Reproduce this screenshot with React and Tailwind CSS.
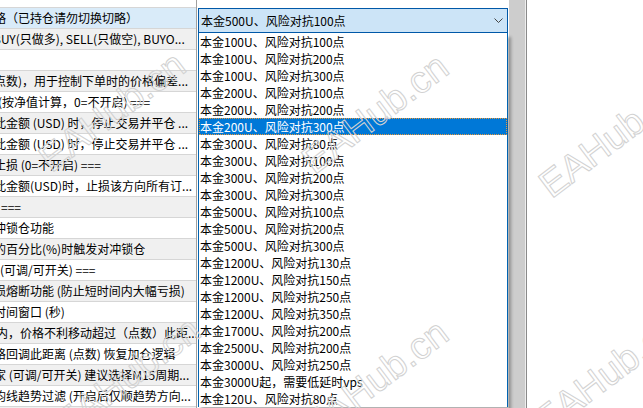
import React from "react";

const rows = [
  { t: "略（已持仓请勿切换切略）", ml: "ml-[-6px]", bg: "bg-[#d9ebf9]" },
  { t: "BUY(只做多), SELL(只做空), BUYO...", ml: "ml-[-7px]", bg: "bg-[#f0f0f0]" },
  { t: "", ml: "ml-0", bg: "bg-white" },
  { t: "点数)，用于控制下单时的价格偏差...", ml: "ml-[-6px]", bg: "bg-[#f0f0f0]" },
  { t: "(按净值计算，0=不开启) ===", ml: "ml-[-2px]", bg: "bg-white" },
  { t: "此金额 (USD) 时，停止交易并平仓 ...", ml: "ml-[-6px]", bg: "bg-[#f0f0f0]" },
  { t: "此金额 (USD) 时，停止交易并平仓 ...", ml: "ml-[-6px]", bg: "bg-white" },
  { t: "止损 (0=不开启) ===", ml: "ml-[-6px]", bg: "bg-[#f0f0f0]" },
  { t: "此金额(USD)时，止损该方向所有订...", ml: "ml-[-6px]", bg: "bg-white" },
  { t: "===", ml: "ml-px", bg: "bg-[#f0f0f0]" },
  { t: "冲锁仓功能", ml: "ml-[-6px]", bg: "bg-white" },
  { t: "的百分比(%)时触发对冲锁仓", ml: "ml-[-6px]", bg: "bg-[#f0f0f0]" },
  { t: "(可调/可开关) ===", ml: "ml-0", bg: "bg-white" },
  { t: "损熔断功能 (防止短时间内大幅亏损)", ml: "ml-[-6px]", bg: "bg-[#f0f0f0]" },
  { t: "时间窗口 (秒)", ml: "ml-[-6px]", bg: "bg-white" },
  { t: "内，价格不利移动超过（点数）此距...", ml: "ml-[-4px]", bg: "bg-[#f0f0f0]" },
  { t: "格回调此距离 (点数) 恢复加仓逻辑", ml: "ml-[-6px]", bg: "bg-white" },
  { t: "家 (可调/可开关) 建议选择M15周期...", ml: "ml-[-6px]", bg: "bg-[#f0f0f0]" },
  { t: "均线趋势过滤 (开启后仅顺趋势方向...", ml: "ml-[-6px]", bg: "bg-white" },
  { t: "", ml: "ml-0", bg: "bg-[#f0f0f0]" },
];

const items = [
  "本金100U、风险对抗100点",
  "本金100U、风险对抗200点",
  "本金100U、风险对抗300点",
  "本金200U、风险对抗100点",
  "本金200U、风险对抗200点",
  "本金200U、风险对抗300点",
  "本金300U、风险对抗80点",
  "本金300U、风险对抗100点",
  "本金300U、风险对抗200点",
  "本金300U、风险对抗300点",
  "本金500U、风险对抗100点",
  "本金500U、风险对抗200点",
  "本金500U、风险对抗300点",
  "本金1200U、风险对抗130点",
  "本金1200U、风险对抗150点",
  "本金1200U、风险对抗250点",
  "本金1200U、风险对抗350点",
  "本金1700U、风险对抗200点",
  "本金2500U、风险对抗200点",
  "本金3000U、风险对抗250点",
  "本金3000U起，需要低延时vps",
  "本金120U、风险对抗80点",
];

const marks = [
  "left-[55px] top-[140px]",
  "left-[318px] top-[142px]",
  "left-[555px] top-[166px]",
  "left-[70px] top-[405px]",
  "left-[318px] top-[408px]",
  "left-[550px] top-[402px]",
  "left-[185px] top-[-116px]",
];

export default function App() {
  return (
    <div className="relative w-[643px] h-[408px] overflow-hidden bg-white flex font-['Noto_Sans_CJK_SC','Noto_Sans',sans-serif] text-[12px] text-black">
      {/* name column */}
      <div className="w-[197px] shrink-0 border-r border-[#a0a0a0] flex flex-col">
        <div className="h-[7px] shrink-0 bg-white" />
        {rows.map((r, i) => (
          <div key={i} className={`h-[21px] shrink-0 border-t border-[#d6d6d6] overflow-hidden ${r.bg}`}>
            <div className={`${r.ml} h-5 leading-5 whitespace-nowrap overflow-hidden`}>
              {r.t}
            </div>
          </div>
        ))}
      </div>

      {/* value column with open combo */}
      <div className="w-[312px] shrink-0 flex flex-col pt-[8px] pl-px pr-px">
        <div className="relative z-10 flex flex-col">
          <div className="h-[25px] border border-[#0058a8] bg-[#cce4f7] flex items-center justify-between pl-[2px] pr-[3px]">
            <span className="leading-[22px] whitespace-nowrap">本金500U、风险对抗100点</span>
            <svg width="9" height="5" viewBox="0 0 9 5" className="mr-[1px]">
              <polyline points="0.5,0.5 4.5,4.5 8.5,0.5" fill="none" stroke="#444" strokeWidth="1" />
            </svg>
          </div>
          <div className="border-x border-[#0063b1] bg-white shadow-[3px_4px_3px_rgba(0,0,0,0.3)] flex flex-col">
            {items.map((it, i) => (
              <div
                key={i}
                className={
                  i === 5
                    ? "h-[17px] leading-[17px] pl-px whitespace-nowrap bg-[#0078d7] text-white outline-1 outline-dotted outline-[#e8983a] -outline-offset-1"
                    : "h-[17px] leading-[17px] pl-px whitespace-nowrap"
                }
              >
                {it}
              </div>
            ))}
          </div>
        </div>
      </div>

      {/* scrollbar */}
      <div className="w-[16px] shrink-0 bg-[#cdcdcd]" />
      <div className="w-px shrink-0 bg-[#eeeeee]" />
      <div className="w-px shrink-0 bg-[#8a8a8a]" />
      <div className="flex-1 bg-white" />

      {/* watermarks */}
      {marks.map((m, i) => (
        <div
          key={i}
          className={`absolute ${m} pointer-events-none z-20 origin-bottom-left -rotate-[37deg] whitespace-nowrap font-['Liberation_Sans',sans-serif] text-[38px] leading-[38px] text-transparent [-webkit-text-stroke:1px_#d2d2d2]`}
        >
          EAHub.cn
        </div>
      ))}
    </div>
  );
}
